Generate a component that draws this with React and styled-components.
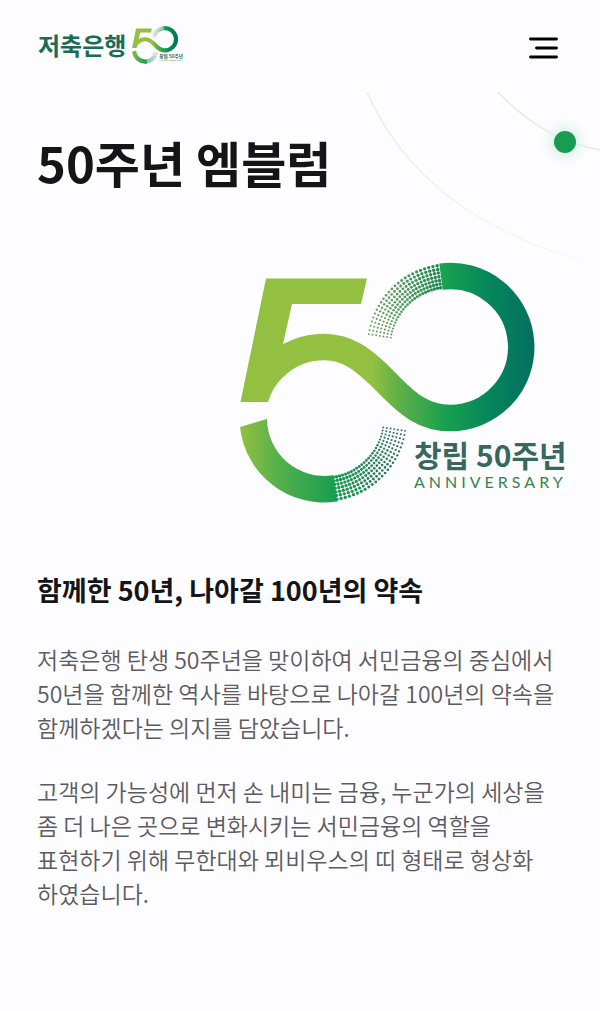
import React, { useId } from "react";
import styled, { createGlobalStyle } from "styled-components";

const GlobalStyle = createGlobalStyle`
  *, *::before, *::after { box-sizing: border-box; }
  body {
    margin: 0;
    background: #fdfcfe;
    color: #151517;
    font-family: "Noto Sans CJK KR", sans-serif;
    word-break: keep-all;
  }
`;

const Page = styled.div`
  display: flex;
  flex-direction: column;
`;

const Header = styled.header`
  display: flex;
  align-items: center;
  justify-content: space-between;
  height: 90px;
  padding: 0 38px;
`;

const Logo = styled.a`
  display: flex;
  align-items: center;
  gap: 6px;
  color: #1b6c54;
  font-size: 24px;
  line-height: 36px;
  font-weight: 700;
  text-decoration: none;
`;

const MenuButton = styled.button`
  display: flex;
  padding: 4px;
  margin-top: 6px;
  border: 0;
  background: none;
  color: #000;
  cursor: pointer;
`;

const Main = styled.main`
  position: relative;
  display: flex;
  flex-direction: column;
  padding: 36px 34px 96px 37px;
`;

const Orbit = styled.svg`
  position: absolute;
  top: 2px;
  right: 0;
  pointer-events: none;
`;

const Title = styled.h1`
  position: relative;
  margin: 0;
  font-size: 49px;
  line-height: 72px;
  font-weight: 700;
`;

const EmblemFrame = styled.figure`
  display: flex;
  justify-content: flex-end;
  margin: 64px 0 66px;
`;

const EmblemSvg = styled.svg`
  display: block;
  width: ${(p) => p.$width}px;
  height: auto;
`;

const Subtitle = styled.h2`
  margin: 0 0 32px;
  font-size: 27px;
  line-height: 40px;
  font-weight: 700;
`;

const Paragraph = styled.p`
  margin: 0 0 30px;
  color: #5c5b5f;
  font-size: 23px;
  line-height: 34px;
  font-weight: 350;
`;

const Line = styled.span`
  display: block;
`;

const ringDots = (cx, cy, startDeg) => {
  const dots = [];
  for (let row = 0; row < 25; row += 1) {
    const angle = ((startDeg - row * 3) * Math.PI) / 180;
    for (let col = 0; col < 7; col += 1) {
      const r = 60 + col * 3.7;
      dots.push({
        key: `${row}-${col}`,
        x: (cx + r * Math.cos(angle)).toFixed(2),
        y: (cy + r * Math.sin(angle)).toFixed(2),
        r: (1.75 - row * 0.032).toFixed(2),
      });
    }
  }
  return dots;
};

const UPPER_DOTS = ringDots(450, 347, 261);
const LOWER_DOTS = ringDots(324, 418, 81);

function Emblem({ width }) {
  const id = useId().replace(/[^a-zA-Z0-9]/g, "");
  return (
    <EmblemSvg $width={width} viewBox="240 262 326 242" role="img" aria-label="창립 50주년 엠블럼">
      <defs>
        <linearGradient id={`${id}band`} gradientUnits="userSpaceOnUse" x1="240" y1="0" x2="534" y2="0">
          <stop offset="0" stopColor="#93c041" />
          <stop offset="0.45" stopColor="#93c041" />
          <stop offset="0.53" stopColor="#64b149" />
          <stop offset="0.7" stopColor="#17a050" />
          <stop offset="0.86" stopColor="#05845c" />
          <stop offset="1" stopColor="#04705f" />
        </linearGradient>
        <linearGradient id={`${id}arc`} gradientUnits="userSpaceOnUse" x1="240" y1="0" x2="334" y2="0">
          <stop offset="0" stopColor="#93c041" />
          <stop offset="0.4" stopColor="#56b04b" />
          <stop offset="1" stopColor="#189f50" />
        </linearGradient>
        <linearGradient id={`${id}dots`} gradientUnits="userSpaceOnUse" x1="368" y1="0" x2="442" y2="0">
          <stop offset="0" stopColor="#7aa765" />
          <stop offset="1" stopColor="#14894c" />
        </linearGradient>
        <linearGradient id={`${id}low`} gradientUnits="userSpaceOnUse" x1="334" y1="0" x2="408" y2="0">
          <stop offset="0" stopColor="#169b50" />
          <stop offset="1" stopColor="#2f6e5b" />
        </linearGradient>
      </defs>
      <path
        fill="#93c041"
        d="M266 278.5H367L361 304H292L283 344V377A58 58 0 0 0 268 402H240.500Z"
      />
      <path
        fill="none"
        stroke={`url(#${id}band)`}
        strokeWidth="26.500"
        d="M274 367.600A71 71 0 0 1 324 347C348 347 363 360 378 374L392 388C408 404 424 418 450 418A71 71 0 1 0 441 276.600"
      />
      <path
        fill={`url(#${id}arc)`}
        d="M240 427L267 419A57.500 57.500 0 0 0 333 475.300L337 501.500A84.500 84.500 0 0 1 240 427Z"
      />
      <g fill={`url(#${id}dots)`}>
        {UPPER_DOTS.map((d) => <circle key={d.key} cx={d.x} cy={d.y} r={d.r} />)}
      </g>
      <g fill={`url(#${id}low)`}>
        {LOWER_DOTS.map((d) => <circle key={d.key} cx={d.x} cy={d.y} r={d.r} />)}
      </g>
      <text x="414" y="467" fill="#35695f" fontSize="30" fontWeight="700">창립 50주년</text>
      <text x="414" y="488" fill="#35854f" fontFamily="Lato, sans-serif" fontSize="16" letterSpacing="4">ANNIVERSARY</text>
    </EmblemSvg>
  );
}

function MenuIcon() {
  return (
    <svg width="30" height="22" viewBox="0 0 30 22" aria-hidden="true">
      <path
        d="M2.500 2H28.500M8.500 11H28.500M2.500 20H28.500"
        stroke="currentColor"
        strokeWidth="2.800"
        strokeLinecap="round"
      />
    </svg>
  );
}

function OrbitLines() {
  return (
    <Orbit width="240" height="180" viewBox="360 92 240 180" aria-hidden="true">
      <defs>
        <radialGradient id="orbitGlow">
          <stop offset="0.35" stopColor="#c9efdd" stopOpacity="0.7" />
          <stop offset="1" stopColor="#e4f8ee" stopOpacity="0" />
        </radialGradient>
        <linearGradient id="orbitFade" x1="0" y1="0" x2="1" y2="1">
          <stop offset="0" stopColor="#e9ece7" />
          <stop offset="1" stopColor="#f8f8fa" />
        </linearGradient>
      </defs>
      <path d="M367 92C398 163 462 226 580 260" fill="none" stroke="url(#orbitFade)" strokeWidth="1.500" />
      <path d="M498 92C527 123 560 143 600 150" fill="none" stroke="#e6ebe0" strokeWidth="1.500" />
      <circle cx="565" cy="142" r="25" fill="url(#orbitGlow)" />
      <circle cx="565" cy="142" r="11" fill="#189b55" />
    </Orbit>
  );
}

export default function App() {
  return (
    <Page>
      <GlobalStyle />
      <Header>
        <Logo href="#home">
          <span>저축은행</span>
          <Emblem width={51} />
        </Logo>
        <MenuButton type="button" aria-label="메뉴 열기">
          <MenuIcon />
        </MenuButton>
      </Header>
      <Main>
        <OrbitLines />
        <Title>50주년 엠블럼</Title>
        <EmblemFrame>
          <Emblem width={326} />
        </EmblemFrame>
        <Subtitle>함께한 50년, 나아갈 100년의 약속</Subtitle>
        <Paragraph>
          <Line>저축은행 탄생 50주년을 맞이하여 서민금융의 중심에서</Line>
          <Line>50년을 함께한 역사를 바탕으로 나아갈 100년의 약속을</Line>
          <Line>함께하겠다는 의지를 담았습니다.</Line>
        </Paragraph>
        <Paragraph>
          <Line>고객의 가능성에 먼저 손 내미는 금융, 누군가의 세상을</Line>
          <Line>좀 더 나은 곳으로 변화시키는 서민금융의 역할을</Line>
          <Line>표현하기 위해 무한대와 뫼비우스의 띠 형태로 형상화</Line>
          <Line>하였습니다.</Line>
        </Paragraph>
      </Main>
    </Page>
  );
}
